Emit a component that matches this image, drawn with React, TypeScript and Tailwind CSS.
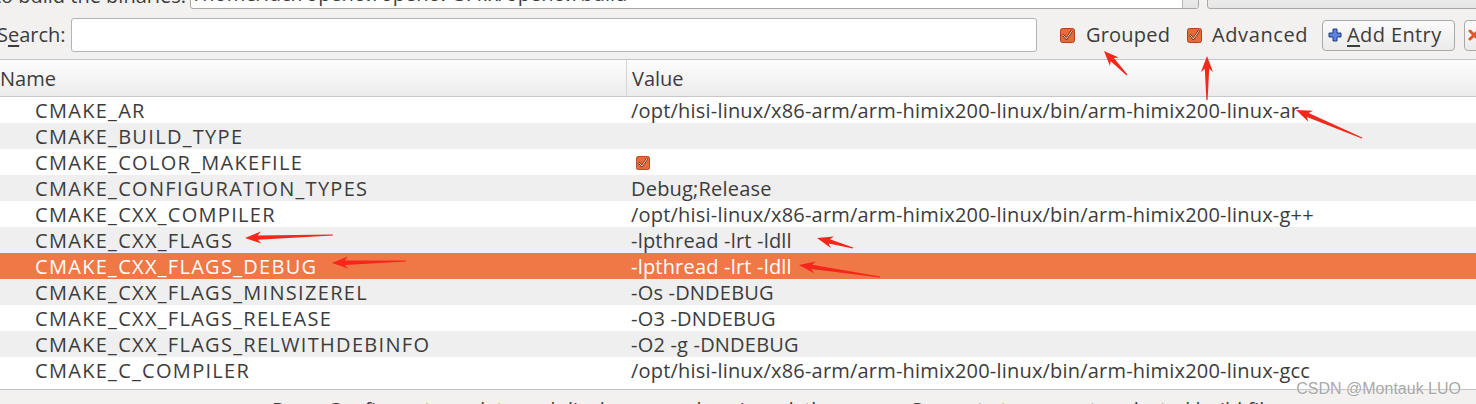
import React from "react";

const rows: { name: string; value: string; check?: boolean }[] = [
  { name: "CMAKE_AR", value: "/opt/hisi-linux/x86-arm/arm-himix200-linux/bin/arm-himix200-linux-ar" },
  { name: "CMAKE_BUILD_TYPE", value: "" },
  { name: "CMAKE_COLOR_MAKEFILE", value: "", check: true },
  { name: "CMAKE_CONFIGURATION_TYPES", value: "Debug;Release" },
  { name: "CMAKE_CXX_COMPILER", value: "/opt/hisi-linux/x86-arm/arm-himix200-linux/bin/arm-himix200-linux-g++" },
  { name: "CMAKE_CXX_FLAGS", value: "-lpthread -lrt -ldll" },
  { name: "CMAKE_CXX_FLAGS_DEBUG", value: "-lpthread -lrt -ldll" },
  { name: "CMAKE_CXX_FLAGS_MINSIZEREL", value: "-Os -DNDEBUG" },
  { name: "CMAKE_CXX_FLAGS_RELEASE", value: "-O3 -DNDEBUG" },
  { name: "CMAKE_CXX_FLAGS_RELWITHDEBINFO", value: "-O2 -g -DNDEBUG" },
  { name: "CMAKE_C_COMPILER", value: "/opt/hisi-linux/x86-arm/arm-himix200-linux/bin/arm-himix200-linux-gcc" },
];

const SELECTED = 6;

function CheckBox({ small }: { small?: boolean }) {
  const s = small ? 14 : 15;
  return (
    <svg width={s} height={s} viewBox="0 0 15 15">
      <rect x="0.5" y="0.5" width="14" height="14" rx="2" fill="#e8693a" stroke="#a9461f" />
      <path d="M3.5 7.5 L6.3 10.8 L11.5 3.5" fill="none" stroke="#6b2d12" strokeWidth="2.2" strokeLinecap="round" strokeLinejoin="round" />
      <path d="M3.5 7.5 L6.3 10.8 L11.5 3.5" fill="none" stroke="#fbe3d6" strokeWidth="1" strokeLinecap="round" strokeLinejoin="round" />
    </svg>
  );
}

// red annotation arrow, tail -> tip
function arrowPoints(x1: number, y1: number, x2: number, y2: number) {
  const dx = x2 - x1;
  const dy = y2 - y1;
  const len = Math.hypot(dx, dy);
  const ux = dx / len;
  const uy = dy / len;
  const nx = -uy;
  const ny = ux;
  const head = Math.min(16, len * 0.45);
  const bx = x2 - ux * head;
  const by = y2 - uy * head;
  const bx2 = x2 - ux * head * 0.8;
  const by2 = y2 - uy * head * 0.8;
  const pts = [
    [x1 + nx * 0.6, y1 + ny * 0.6],
    [bx2 + nx * 2.2, by2 + ny * 2.2],
    [bx + nx * 6, by + ny * 6],
    [x2, y2],
    [bx - nx * 6, by - ny * 6],
    [bx2 - nx * 2.2, by2 - ny * 2.2],
    [x1 - nx * 0.6, y1 - ny * 0.6],
  ];
  return pts.map((p) => p.map((v) => v.toFixed(1)).join(",")).join(" ");
}

const arrows: [number, number, number, number][] = [
  [1127, 75, 1104, 51],
  [1207, 100, 1207, 56],
  [1362, 138, 1296, 110],
  [333, 235, 245, 238],
  [406, 261, 332, 263],
  [853, 248, 817, 238],
  [880, 277, 799, 265],
];

export default function App() {
  return (
    <div className="relative w-[1476px] h-[404px] overflow-hidden bg-[#f2f1f0] text-[#3c3c3c] font-['Open_Sans',sans-serif] text-[20px]">
      {/* build dir row, mostly scrolled off the top */}
      <div className="flex items-center h-[34px] -mt-[25px]">
        <div className="w-[190px] shrink-0 flex justify-end pr-[4px] pt-[8px]">
          <span className="whitespace-nowrap leading-none">Where to build the binaries:</span>
        </div>
        <div className="flex h-[34px] w-[1009px] shrink-0 border border-[#a8a8a8] rounded-[3px] bg-white">
          <span className="flex-1 px-[4px] pt-[2px] leading-[32px] whitespace-nowrap overflow-hidden">/home/lucr/opencv/opencv-3.4.x/opencv/build</span>
          <div className="w-[16px] border-l border-[#b8b8b8] bg-gradient-to-b from-[#fafafa] to-[#e4e4e4] rounded-br-[3px]" />
        </div>
        <div className="ml-[8px] h-[34px] w-[300px] shrink-0 border border-[#a8a8a8] rounded-[3px] bg-gradient-to-b from-[#fafafa] to-[#e6e6e6]" />
      </div>

      {/* search row */}
      <div className="flex items-center h-[34px] mt-[9px]">
        <span className="-ml-[3px] w-[74px] shrink-0 whitespace-nowrap">
          S<span className="underline underline-offset-[3px]">e</span>arch:
        </span>
        <div className="h-[34px] w-[966px] shrink-0 border border-[#b3b3b3] rounded-[3px] bg-white" />
        <div className="ml-[23px] shrink-0 flex items-center gap-[11px]">
          <CheckBox />
          <span className="w-[84px] whitespace-nowrap tracking-[0.2px]">Grouped</span>
        </div>
        <div className="ml-[17px] shrink-0 flex items-center gap-[10px]">
          <CheckBox />
          <span className="w-[96px] whitespace-nowrap tracking-[0.6px]">Advanced</span>
        </div>
        <button className="ml-[14px] h-[31px] w-[133px] shrink-0 flex items-center gap-[5px] pl-[5px] border border-[#a9a9a9] rounded-[4px] bg-gradient-to-b from-[#fbfbfb] to-[#ebebeb]">
          <svg width="14" height="14" viewBox="0 0 14 14">
            <path d="M5 1h4v4h4v4H9v4H5V9H1V5h4z" fill="#5d84d8" stroke="#1f3a8a" strokeWidth="1" />
          </svg>
          <span className="whitespace-nowrap tracking-[0.4px]">
            <span className="underline underline-offset-[3px]">A</span>dd Entry
          </span>
        </button>
        <button className="ml-[9px] h-[31px] w-[60px] shrink-0 flex items-center pl-[3px] border border-[#a9a9a9] rounded-[4px] bg-gradient-to-b from-[#fbfbfb] to-[#ebebeb]">
          <svg width="12" height="12" viewBox="0 0 12 12">
            <path d="M2 2 L10 10 M10 2 L2 10" stroke="#e2572a" strokeWidth="3" strokeLinecap="round" />
          </svg>
        </button>
      </div>

      {/* cache table */}
      <div className="mt-[7px] h-[331px] border-y border-[#c3c3c3] bg-white flex flex-col">
        <div className="flex h-[37px] shrink-0 border-b border-[#c8c8c8] bg-gradient-to-b from-[#fdfdfd] to-[#ececec]">
          <div className="w-[627px] shrink-0 border-r border-[#d6d6d6] flex items-center pt-[2px]">Name</div>
          <div className="flex-1 flex items-center pl-[5px] pt-[2px]">Value</div>
        </div>
        {rows.map((r, i) => {
          const sel = i === SELECTED;
          const bg = sel ? "bg-[#f07746] text-white" : i % 2 === 1 ? "bg-[#efefef]" : "bg-white";
          return (
            <div key={r.name} className={`flex h-[26px] shrink-0 items-center pt-[1px] ${bg}`}>
              <div className="w-[631px] shrink-0 pl-[35px] whitespace-nowrap tracking-[1.3px]">{r.name}</div>
              <div className="flex-1 whitespace-nowrap tracking-[0.2px]">
                {r.check ? (
                  <span className="inline-flex pl-[5px] pt-[3px]">
                    <CheckBox small />
                  </span>
                ) : (
                  r.value
                )}
              </div>
            </div>
          );
        })}
      </div>

      {/* status text, cut at the bottom */}
      <div className="pl-[272px] pt-[5px] whitespace-nowrap">
        Press Configure to update and display new values in red, then press Generate to generate selected build files.
      </div>

      <div className="absolute right-[15px] top-[377px] text-[16px] text-[#a8a8a8] font-['Liberation_Sans',sans-serif] [text-shadow:0_0_2px_#ffffff]">
        CSDN @Montauk LUO
      </div>

      <svg className="absolute inset-0 pointer-events-none" width="1476" height="404">
        {arrows.map((a, i) => (
          <polygon key={i} points={arrowPoints(a[0], a[1], a[2], a[3])} fill="#f5261a" />
        ))}
      </svg>
    </div>
  );
}
